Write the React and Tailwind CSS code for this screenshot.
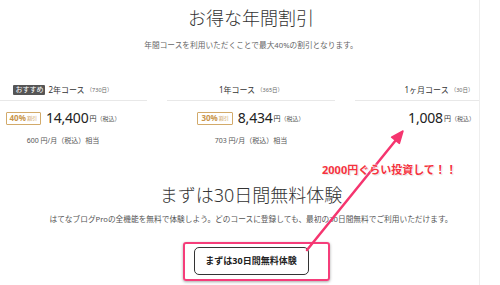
const font = { fontFamily: '"Noto Sans", "Noto Sans CJK JP", sans-serif' };

function Badge({ pct }) {
  return (
    <span className="flex h-[13px] items-center rounded-[1px] border border-[#d2aa6a] px-[3px] leading-none text-[#c9954a]">
      <span className="text-[8px] font-bold">{pct}%</span>
      <span className="ml-[1px] text-[5px]">割引</span>
    </span>
  );
}

function Plan({ name, days, price, sub, pct, recommend }) {
  return (
    <div className="w-[188px] shrink-0 px-[10px]">
      <div className="flex h-[12px] items-center justify-center gap-[2px] text-[8px] leading-[12px] text-[#333]">
        {recommend && (
          <span className="mr-[1px] rounded-[1px] bg-[#555] px-[2px] text-[7px] leading-[10px] text-white">おすすめ</span>
        )}
        <span>{name}</span>
        <span className="text-[5.5px] text-[#666]">（{days}日）</span>
      </div>
      <div className="mt-[4px] border-b border-[#e8e8e8]" />
      <div className="mt-[7px] flex h-[20px] items-center justify-center">
        {pct && <Badge pct={pct} />}
        <span className="ml-[5px] text-[14px] leading-[20px] tracking-[-0.2px] text-[#222]">{price}</span>
        <span className="ml-[1px] mt-[3px] text-[7px] text-[#333]">円</span>
        <span className="mt-[3px] text-[6px] text-[#555]">（税込）</span>
      </div>
      <div className="mt-[7px] h-[12px] text-center text-[7px] leading-[12px] text-[#555]">{sub}</div>
    </div>
  );
}

export default function App() {
  return (
    <div className="relative h-[285px] w-[500px] overflow-hidden bg-white" style={font}>
      <div className="w-[480px] overflow-hidden border-r border-[#eeeeee]">
        <div className="w-[502px] pb-[10px]">
          <h1 className="mt-[8px] text-center text-[18px] font-light leading-[20px] text-[#333]">お得な年間割引</h1>
          <p className="mt-[11px] text-center text-[7.7px] leading-[12px] text-[#666]">
            年間コースを利用いただくことで最大40%の割引となります。
          </p>
          <div className="ml-[-31px] mt-[33px] flex">
            <Plan recommend name="2年コース" days="730" price="14,400" pct="40" sub="600 円/月（税込）相当" />
            <Plan name="1年コース" days="365" price="8,434" pct="30" sub="703 円/月（税込）相当" />
            <Plan name="1ヶ月コース" days="30" price="1,008" sub="" />
          </div>
          <h2 className="mt-[38px] text-center text-[18px] font-light leading-[20px] text-[#333]">まずは30日間無料体験</h2>
          <p className="mt-[8px] text-center text-[7.7px] leading-[12px] text-[#555]">
            はてなブログProの全機能を無料で体験しよう。どのコースに登録しても、最初の30日間無料でご利用いただけます。
          </p>
          <div className="mt-[22px] flex justify-center">
            <div className="relative">
              <button className="flex h-[28px] w-[115px] items-center justify-center rounded-[5px] border-[1.5px] border-[#333] bg-white text-[9px] font-bold text-[#222]">
                まずは30日間無料体験
              </button>
              <div className="pointer-events-none absolute -bottom-[6px] -left-[11px] -right-[21px] -top-[5px] rounded-[3px] border-2 border-[#f53d7a] shadow-[0_1px_3px_rgba(0,0,0,0.35)]" />
            </div>
          </div>
        </div>
      </div>

      <svg className="pointer-events-none absolute left-0 top-0" width="500" height="285">
        <line x1="307" y1="250" x2="396" y2="140" stroke="#f5356f" strokeWidth="2.5" strokeLinecap="round" />
        <polygon points="403,131 399.4,143.4 391.6,137.2" fill="#f5356f" stroke="#f5356f" strokeWidth="1.5" strokeLinejoin="round" />
      </svg>
      <div
        className="absolute left-[322px] top-[163px] text-[11px] font-bold leading-[14px] text-[#f5333f]"
        style={{ textShadow: '0 0 2px #fff, 0 0 2px #fff, 1px 1px 1px rgba(0,0,0,0.15)' }}
      >
        2000円ぐらい投資して！！
      </div>
    </div>
  );
}
